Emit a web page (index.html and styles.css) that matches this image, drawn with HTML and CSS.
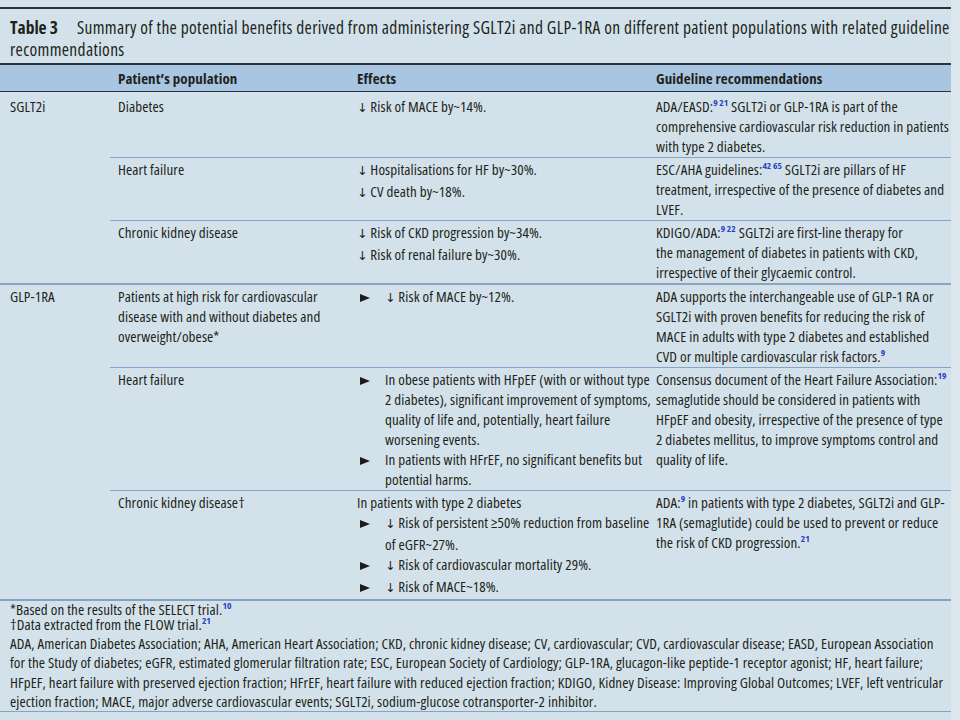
FILE: index.html
```html
<!DOCTYPE html>
<html lang="en">
<head>
<meta charset="utf-8">
<title>Table 3</title>
<link rel="stylesheet" href="styles.css">
</head>
<body>
<div class="panel">
  <p class="caption"><b class="label">Table 3</b>Summary of the potential benefits derived from administering SGLT2i and GLP-1RA on different patient populations with related guideline recommendations</p>
  <table class="data">
    <colgroup>
      <col class="c1"><col class="c2"><col class="c3"><col class="c4">
    </colgroup>
    <thead>
      <tr><th></th><th>Patient’s population</th><th>Effects</th><th>Guideline recommendations</th></tr>
    </thead>
    <tbody class="group first">
      <tr class="lead">
        <td rowspan="3" class="drug">SGLT2i</td>
        <td>Diabetes</td>
        <td><span class="dn">↓</span> Risk of MACE by~14%.</td>
        <td>ADA/EASD:<sup>9 21</sup> SGLT2i or GLP-1RA is part of the comprehensive cardiovascular risk reduction in patients with type 2 diabetes.</td>
      </tr>
      <tr>
        <td>Heart failure</td>
        <td><span class="dn">↓</span> Hospitalisations for HF by~30%.<br><span class="dn">↓</span> CV death by~18%.</td>
        <td>ESC/AHA guidelines:<sup>42 65</sup> SGLT2i are pillars of HF treatment, irrespective of the presence of diabetes and LVEF.</td>
      </tr>
      <tr>
        <td>Chronic kidney disease</td>
        <td><span class="dn">↓</span> Risk of CKD progression by~34%.<br><span class="dn">↓</span> Risk of renal failure by~30%.</td>
        <td>KDIGO/ADA:<sup>9 22</sup> SGLT2i are first-line therapy for<br>the management of diabetes in patients with CKD, irrespective of their glycaemic control.</td>
      </tr>
    </tbody>
    <tbody class="group">
      <tr class="lead">
        <td rowspan="3" class="drug">GLP-1RA</td>
        <td>Patients at high risk for cardiovascular disease with and without diabetes and overweight/obese*</td>
        <td><ul class="tri"><li><span class="dn">↓</span> Risk of MACE by~12%.</li></ul></td>
        <td>ADA supports the interchangeable use of GLP-1 RA or SGLT2i with proven benefits for reducing the risk of MACE in adults with type 2 diabetes and established CVD or multiple cardiovascular risk factors.<sup>9</sup></td>
      </tr>
      <tr>
        <td>Heart failure</td>
        <td><ul class="tri"><li>In obese patients with HFpEF (with or without type 2 diabetes), significant improvement of symptoms, quality of life and, potentially, heart failure worsening events.</li><li>In patients with HFrEF, no significant benefits but potential harms.</li></ul></td>
        <td>Consensus document of the Heart Failure Association:<sup>19</sup> semaglutide should be considered in patients with HFpEF and obesity, irrespective of the presence of type 2 diabetes mellitus, to improve symptoms control and quality of life.</td>
      </tr>
      <tr>
        <td>Chronic kidney disease†</td>
        <td>In patients with type 2 diabetes<ul class="tri"><li><span class="dn">↓</span> Risk of persistent ≥50% reduction from baseline of eGFR~27%.</li><li><span class="dn">↓</span> Risk of cardiovascular mortality 29%.</li><li><span class="dn">↓</span> Risk of MACE~18%.</li></ul></td>
        <td>ADA:<sup>9</sup> in patients with type 2 diabetes, SGLT2i and GLP-<wbr>1RA (semaglutide) could be used to prevent or reduce the risk of CKD progression.<sup>21</sup></td>
      </tr>
    </tbody>
  </table>
  <div class="notes">
    <p class="fn">*Based on the results of the SELECT trial.<sup>10</sup></p>
    <p class="fn">†Data extracted from the FLOW trial.<sup>21</sup></p>
    <p class="abbr">ADA, American Diabetes Association; AHA, American Heart Association; CKD, chronic kidney disease; CV, cardiovascular; CVD, cardiovascular disease; EASD, European Association for the Study of diabetes; eGFR, estimated glomerular filtration rate; ESC, European Society of Cardiology; GLP-1RA, glucagon-like peptide-1 receptor agonist; HF, heart failure; HFpEF, heart failure with preserved ejection fraction; HFrEF, heart failure with reduced ejection fraction; KDIGO, Kidney Disease: Improving Global Outcomes; LVEF, left ventricular ejection fraction; MACE, major adverse cardiovascular events; SGLT2i, sodium-glucose cotransporter-2 inhibitor.</p>
  </div>
</div>
</body>
</html>
```
FILE: styles.css
```css
html, body {
  margin: 0;
  padding: 0;
}
body {
  background: #dce7ed;
  width: 960px;
  height: 720px;
  overflow: hidden;
  font-family: "Open Sans", "Liberation Sans", sans-serif;
  font-stretch: 75%;
  color: #221f20;
}
.panel {
  width: 951px;
  height: 720px;
  background: #d3e2ea;
  padding-top: 7px;
  box-sizing: border-box;
}
.caption {
  margin: 0 0 3px;
  border-top: 2px solid #2a323c;
  padding: 7px 0 0 10px;
  font-size: 17.5px;
  letter-spacing: 0.33px;
  line-height: 22px;
}
.label {
  font-weight: 700;
  margin-right: 19px;
  letter-spacing: 0;
}
.data {
  width: 951px;
  border-collapse: collapse;
  table-layout: fixed;
  font-size: 15px;
  letter-spacing: 0.1px;
  line-height: 20px;
}
.c1 { width: 110px; }
.c2 { width: 239px; }
.c3 { width: 302px; }
.c4 { width: 300px; }
.data th {
  background: #a8c5e2;
  border-top: 2px solid #2a323c;
  border-bottom: 1px solid #2a323c;
  padding: 3px 0 3px 8px;
  text-align: left;
  font-weight: 700;
}
.data th:nth-child(4) { padding-left: 5px; }
.data td {
  vertical-align: top;
  padding: 1px 0 1px 8px;
  border-top: 1px solid #86a4c7;
}
.data td:last-child { padding-left: 5px; padding-right: 0; }
.data td.drug { padding-left: 10px; }
.group.first tr.lead td { border-top: none; padding-top: 4px; }
.group + .group tr.lead td { border-top: 2px solid #8ba4bf; }
.dn {
  font-family: "DejaVu Sans", sans-serif;
  font-size: 12.5px;
  font-stretch: normal;
  letter-spacing: 0;
}
.tri {
  list-style: none;
  margin: 0;
  padding: 0 0 0 28px;
}
.tri li::before {
  content: "";
  display: inline-block;
  width: 0;
  height: 0;
  border-left: 10px solid #1d1b1c;
  border-top: 4.5px solid transparent;
  border-bottom: 4.5px solid transparent;
  margin-left: -25px;
  margin-right: 15px;
  vertical-align: 0;
}
sup {
  font-size: 9.5px;
  line-height: 0;
  vertical-align: 6px;
  font-weight: 700;
  letter-spacing: 0;
  color: #2b41c4;
}
.notes {
  border-top: 2px solid #87a2c0;
  border-bottom: 1px solid #87a2c0;
  padding: 0 3px 0 10px;
  font-size: 15px;
  letter-spacing: 0.1px;
}
.fn {
  margin: 0;
  line-height: 15px;
}
.fn:first-child { margin-top: 1px; }
.abbr {
  margin: 2px 0 0;
  line-height: 19.3px;
}
```
